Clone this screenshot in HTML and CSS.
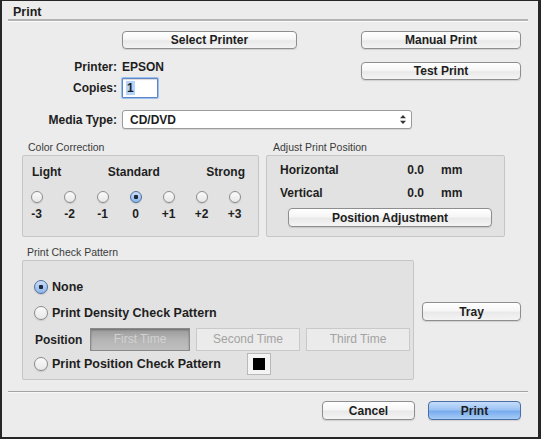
FILE: index.html
```html
<!DOCTYPE html>
<html>
<head>
<meta charset="utf-8">
<link rel="stylesheet" href="styles.css">
</head>
<body>
<div class="win">
  <div class="title">Print</div>

  <div class="top">
    <div class="lbl"></div>
    <div class="cell"><button class="btn btn-sel">Select Printer</button></div>
    <div class="cell"><button class="btn btn-right">Manual Print</button></div>

    <div class="lbl">Printer:</div>
    <div class="val">EPSON</div>
    <div class="cell"><button class="btn btn-right btn-test">Test Print</button></div>

    <div class="lbl">Copies:</div>
    <div class="cell"><div class="copies"><span class="hl">1</span></div></div>
    <div></div>

    <div class="lbl lbl-media">Media Type:</div>
    <div class="cell span2">
      <div class="select">
        <span>CD/DVD</span>
        <svg class="arrows" width="6" height="9" viewBox="0 0 6 9"><path d="M3 0 L6 3.2 L0 3.2 Z M3 9 L6 5.8 L0 5.8 Z" fill="#333"/></svg>
      </div>
    </div>
  </div>

  <div class="groups">
    <div class="group">
      <div class="glabel">Color Correction</div>
      <div class="box box-cc">
        <div class="cc-head"><span>Light</span><span>Standard</span><span>Strong</span></div>
        <div class="cc-grid">
          <span class="radio"></span><span class="radio"></span><span class="radio"></span><span class="radio on"></span><span class="radio"></span><span class="radio"></span><span class="radio"></span>
          <span class="num">-3</span><span class="num">-2</span><span class="num">-1</span><span class="num">0</span><span class="num">+1</span><span class="num">+2</span><span class="num">+3</span>
        </div>
      </div>
    </div>
    <div class="group">
      <div class="glabel glabel-adj">Adjust Print Position</div>
      <div class="box box-adj">
        <div class="adj-row"><span class="adj-k">Horizontal</span><span class="adj-v">0.0</span><span class="adj-u">mm</span></div>
        <div class="adj-row"><span class="adj-k">Vertical</span><span class="adj-v">0.0</span><span class="adj-u">mm</span></div>
        <button class="btn btn-posadj">Position Adjustment</button>
      </div>
    </div>
  </div>

  <div class="pcp-row">
    <div class="group">
      <div class="glabel glabel-pcp">Print Check Pattern</div>
      <div class="box box-pcp">
        <div class="opt"><span class="radio big on"></span><span>None</span></div>
        <div class="opt opt2"><span class="radio big"></span><span>Print Density Check Pattern</span></div>
        <div class="posrow">
          <span class="pos-lbl">Position</span>
          <span class="seg pressed">First Time</span>
          <span class="seg">Second Time</span>
          <span class="seg">Third Time</span>
        </div>
        <div class="opt opt4"><span class="radio big"></span><span>Print Position Check Pattern</span><span class="swatch"><span class="swatch-in"></span></span></div>
      </div>
    </div>
    <button class="btn btn-tray">Tray</button>
  </div>

  <div class="sep"></div>

  <div class="footer">
    <button class="btn btn-foot">Cancel</button>
    <button class="btn btn-foot btn-primary">Print</button>
  </div>
</div>
</body>
</html>
```

FILE: styles.css
```css
* { box-sizing: border-box; }
html, body { margin: 0; padding: 0; background: #ececec; }
body { font-family: "Liberation Sans", Arial, sans-serif; font-size: 12px; color: #1e1e1e; }

.win {
  width: 541px; height: 439px;
  background: #ececec;
  border-style: solid;
  border-color: #262626;
  border-width: 1px 3px 2px 2px;
  overflow: hidden;
}

.title {
  height: 20px;
  margin: 0 10px 0 6px;
  padding: 3px 0 0 5px;
  font-weight: bold;
  font-size: 12.5px;
  line-height: 16px;
  border-bottom: 2px solid #b3b3b3;
  box-shadow: 0 1px 0 #fafafa;
}

/* top grid */
.top {
  display: grid;
  grid-template-columns: 115px 234px 160px;
  grid-template-rows: 26px 21px 32px 19px;
  column-gap: 5px;
  margin-top: 10px;
}
.lbl {
  text-align: right;
  font-weight: bold;
  line-height: 18px;
  margin-top: 1px;
}
.val { font-weight: bold; line-height: 18px; margin-top: 1px; }
.cell { align-self: start; }
.span2 { grid-column: 2 / span 2; }

.btn {
  display: block;
  height: 18px;
  padding: 0;
  border: 1px solid #8e8e8e;
  border-radius: 4px;
  background: linear-gradient(#ffffff, #f6f6f6 45%, #e9e9e9 55%, #f4f4f4);
  box-shadow: 0 1px 1px rgba(0,0,0,0.12);
  font-family: "Liberation Sans", Arial, sans-serif;
  font-weight: bold;
  font-size: 12px;
  line-height: 16px;
  color: #1e1e1e;
  text-align: center;
}
.btn-sel { width: 175px; }
.btn-right { width: 160px; }
.btn-test { margin-top: 5px; }

.copies {
  width: 36px; height: 20px;
  background: #fff;
  border: 1px solid #5c86c6;
  box-shadow: 0 0 0 1px #9dbfee, inset 0 1px 1px rgba(0,0,0,0.15);
  border-radius: 1px;
  padding: 2px 0 0 3px;
  font-weight: bold;
  line-height: 14px;
}
.hl { background: #b6d3fb; padding: 0 1px; }

.select {
  width: 290px; height: 19px;
  background: #fff;
  border: 1px solid #9b9b9b;
  border-radius: 3px;
  box-shadow: 0 1px 1px rgba(0,0,0,0.1);
  display: flex;
  align-items: center;
  justify-content: space-between;
  padding: 0 5px 0 7px;
  font-weight: bold;
}
.arrows { display: block; }

/* groups */
.groups {
  display: flex;
  gap: 7px;
  padding-left: 20px;
  margin-top: 12px;
}
.glabel {
  font-size: 10.5px;
  line-height: 13px;
  color: #3a3a3a;
  padding-left: 6px;
  margin-bottom: 1px;
}
.glabel-adj { padding-left: 7px; }
.glabel-pcp { padding-left: 5px; }
.box {
  background: #e2e2e2;
  border: 1px solid #c6c6c6;
  border-radius: 2px;
}
.box-cc { width: 237px; height: 82px; }
.cc-head {
  display: flex;
  justify-content: space-between;
  padding: 8px 13px 0 9px;
  line-height: 16px;
  font-weight: bold;
}
.cc-grid {
  display: grid;
  grid-template-columns: repeat(7, 33px);
  margin-left: -3px;
  margin-top: 11px;
  justify-items: center;
}
.radio {
  display: block;
  flex: none;
  width: 12px; height: 12px;
  border-radius: 50%;
  border: 1px solid #8d8d8d;
  background: linear-gradient(#fafafa, #e8e8e8);
  box-shadow: 0 1px 1px rgba(0,0,0,0.12);
}
.radio.on {
  border-color: #4f6f9f;
  background: radial-gradient(circle, #1e2a3a 0 2px, transparent 2.5px), linear-gradient(#c9def8, #8db6ec);
}
.num {
  font-weight: bold;
  line-height: 14px;
  margin-top: 4px;
}

.box-adj { width: 239px; height: 82px; padding: 6px 0 0 13px; }
.adj-row {
  display: grid;
  grid-template-columns: 110px 34px 17px auto;
  line-height: 16px;
  font-weight: bold;
  margin-bottom: 7px;
}
.adj-v { grid-column: 2; text-align: right; }
.adj-u { grid-column: 4; }
.btn-posadj { width: 204px; height: 19px; margin: 3px 0 0 8px; }

/* print check pattern */
.pcp-row {
  display: flex;
  align-items: flex-start;
  padding-left: 20px;
  margin-top: 9px;
}
.box-pcp { width: 392px; height: 120px; padding: 17px 3px 0 11px; }
.opt {
  display: flex;
  align-items: center;
  gap: 4px;
  height: 18px;
  font-weight: bold;
  font-size: 12.5px;
}
.opt2 { margin-top: 8px; }
.radio.big { width: 14px; height: 14px; }
.posrow {
  display: flex;
  align-items: center;
  gap: 6px;
  margin-top: 6px;
  height: 23px;
}
.pos-lbl { width: 49px; margin-left: 1px; font-weight: bold; }
.seg {
  flex: 1;
  height: 23px;
  border: 1px solid #c9c9c9;
  background: #ebebeb;
  color: #a3a3a3;
  text-align: center;
  line-height: 21px;
  font-size: 12px;
}
.seg.pressed {
  flex: 0 0 100px;
  border-color: #8a8a8a;
  background: linear-gradient(#9a9a9a, #b4b4b4 50%, #c0c0c0);
  color: #d2d2d2;
  box-shadow: inset 0 1px 2px rgba(0,0,0,0.3);
}
.opt4 { margin-top: 2px; height: 22px; }
.swatch {
  margin-left: 22px;
  width: 24px; height: 22px;
  border: 1px solid #b9b9b9;
  background: #f4f4f4;
  display: flex;
  align-items: center;
  justify-content: center;
}
.swatch-in { width: 12px; height: 12px; background: #000; }

.btn-tray { width: 99px; height: 19px; margin: 56px 0 0 8px; }

.sep {
  margin: 11px 10px 0 6px;
  height: 2px;
  border-top: 1px solid #a4a4a4;
  border-bottom: 1px solid #f8f8f8;
}

.footer {
  display: flex;
  justify-content: flex-end;
  gap: 13px;
  padding-right: 17px;
  margin-top: 8px;
}
.btn-foot { width: 93px; height: 19px; }
.btn-primary {
  border-color: #4b6ea6;
  background: linear-gradient(#c6ddfb, #9cc3f4 45%, #79abee 55%, #a6cdf7);
}
```
